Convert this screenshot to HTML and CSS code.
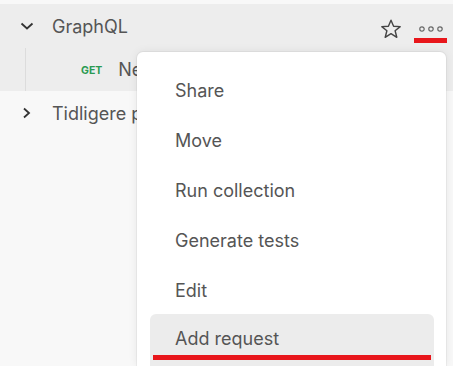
FILE: index.html
```html
<!DOCTYPE html>
<html lang="en">
<head>
    <meta charset="UTF-8">
    <meta name="viewport" content="width=device-width, initial-scale=1.0">
    <link rel="stylesheet" href="styles.css">
    <title>Collections</title>
</head>
<body>
    <div class="sidebar">
        <div class="collection">
            <div class="row">
                <svg class="chevron" width="14" height="8" viewBox="0 0 14 8"><path d="M1.5 1.5 L7 6.5 L12.5 1.5" fill="none" stroke="#333" stroke-width="1.8"/></svg>
                <span class="name">GraphQL</span>
                <div class="actions">
                    <svg class="star" width="22" height="20" viewBox="0 0 22 20"><path d="M11 1.2 L13.6 7.2 L20.2 7.6 L15.1 11.8 L16.8 18.3 L11 14.7 L5.2 18.3 L6.9 11.8 L1.8 7.6 L8.4 7.2 Z" fill="none" stroke="#444" stroke-width="1.4" stroke-linejoin="round"/></svg>
                    <div class="more">
                        <svg width="24" height="6" viewBox="0 0 24 6"><circle cx="3" cy="3" r="2.2" fill="none" stroke="#666" stroke-width="1.2"/><circle cx="12" cy="3" r="2.2" fill="none" stroke="#666" stroke-width="1.2"/><circle cx="21" cy="3" r="2.2" fill="none" stroke="#666" stroke-width="1.2"/></svg>
                        <div class="mark"></div>
                    </div>
                </div>
            </div>
            <div class="row child">
                <div class="guide"></div>
                <span class="method">GET</span>
                <span class="name">New Request</span>
            </div>
        </div>
        <div class="row">
            <svg class="chevron" width="14" height="12" viewBox="0 0 14 12"><path d="M4 1.5 L9 6 L4 10.5" fill="none" stroke="#333" stroke-width="1.8"/></svg>
            <span class="name">Tidligere prosjekter</span>
        </div>
    </div>

    <div class="menu">
        <div class="item">Share</div>
        <div class="item">Move</div>
        <div class="item">Run collection</div>
        <div class="item">Generate tests</div>
        <div class="item">Edit</div>
        <div class="item active">
            Add request
            <div class="mark wide"></div>
        </div>
    </div>
</body>
</html>
```
FILE: styles.css
```css
body {
    font-family: Inter, 'Noto Sans', sans-serif;
    background-color: #f8f8f8;
    margin: 0;
    padding: 0;
    color: #555;
    overflow: hidden;
}

.sidebar {
    padding-top: 4px;
}

.collection {
    background-color: #ededed;
}

.row {
    display: flex;
    align-items: center;
    height: 44px;
    padding-left: 20px;
    font-size: 18px;
}

.row.child {
    height: 43px;
    padding-left: 25px;
}

.chevron {
    width: 14px;
    margin-right: 18px;
}

.actions {
    margin-left: auto;
    display: flex;
    align-items: flex-start;
    padding-right: 6px;
    padding-top: 10px;
}

.star {
    margin-right: 12px;
    margin-top: -1px;
}

.more {
    display: flex;
    flex-direction: column;
    align-items: center;
    padding-top: 6px;
}

.more svg {
    margin-bottom: 6px;
}

.mark {
    width: 33px;
    height: 5px;
    background-color: #e8161b;
}

.guide {
    align-self: stretch;
    width: 1px;
    background-color: #dcdcdc;
    margin-right: 55px;
}

.method {
    font-size: 10.5px;
    font-weight: 700;
    color: #2a9a52;
    margin-right: 16px;
    margin-top: 2px;
}

.menu {
    position: absolute;
    left: 137px;
    top: 52px;
    width: 309px;
    height: 314px;
    overflow: hidden;
    background-color: #fff;
    border-radius: 6px 6px 0 0;
    box-shadow: 0 0 10px rgba(0, 0, 0, 0.08), 0 0 0 1px rgba(0, 0, 0, 0.04);
    padding-top: 13px;
    box-sizing: border-box;
}

.item {
    height: 50px;
    display: flex;
    align-items: center;
    padding-left: 38px;
    font-size: 18px;
}

.item.active {
    flex-direction: column;
    align-items: flex-start;
    justify-content: flex-start;
    margin: -1px 12px 0 13px;
    padding-left: 25px;
    padding-top: 14px;
    height: 48px;
    background-color: #ececec;
    border-radius: 6px;
    line-height: 22px;
}

.mark.wide {
    width: 278px;
    height: 5px;
    margin-left: -22px;
    margin-top: 5px;
}
```
